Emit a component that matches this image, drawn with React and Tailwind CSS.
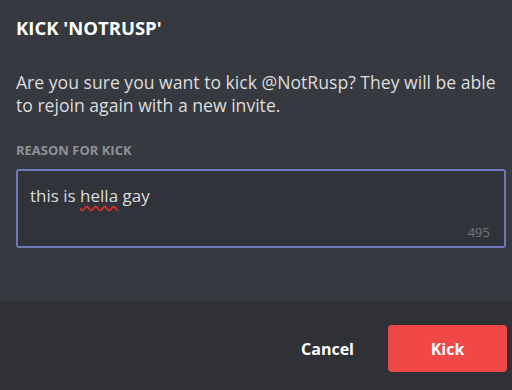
import React from 'react'

export default function App() {
  return (
    <div className="w-[512px] h-[390px] flex flex-col bg-[#36393f] font-['Open_Sans',sans-serif] overflow-hidden">
      <div className="h-[301px] px-4 pt-[16px]">
        <h2 className="text-[18.5px] leading-[24px] font-bold text-white uppercase">Kick 'NotRusp'</h2>
        <p className="mt-[31px] text-[17.6px] leading-[23px] text-[#dcddde]">
          Are you sure you want to kick @NotRusp? They will be able to rejoin again with a new invite.
        </p>
        <div className="mt-[25px] text-[13px] leading-[16px] font-bold uppercase text-[#8e9297]">Reason for kick</div>
        <div className="mt-[11px] h-[79px] w-[490px] rounded-[3px] border-2 border-[#6f78b8] bg-[#303339] px-[12px] pt-[14px] flex flex-col">
          <div className="text-[17px] leading-[22px] text-[#dcddde]">
            this is <span className="underline decoration-wavy decoration-[#d43030] underline-offset-[3px]">hella</span> gay
          </div>
          <div className="mt-auto mb-[6px] self-end text-[13px] leading-[16px] text-[#72767d] pr-[2px]">495</div>
        </div>
      </div>
      <div className="flex-1 bg-[#2f3136] flex items-start justify-end pt-[24px] pr-[5px]">
        <button className="h-[47px] px-[24px] text-[16px] font-bold text-white mr-[10px]">Cancel</button>
        <button className="h-[47px] w-[119px] rounded-[4px] bg-[#f04747] text-[16px] font-bold text-white">Kick</button>
      </div>
    </div>
  )
}
